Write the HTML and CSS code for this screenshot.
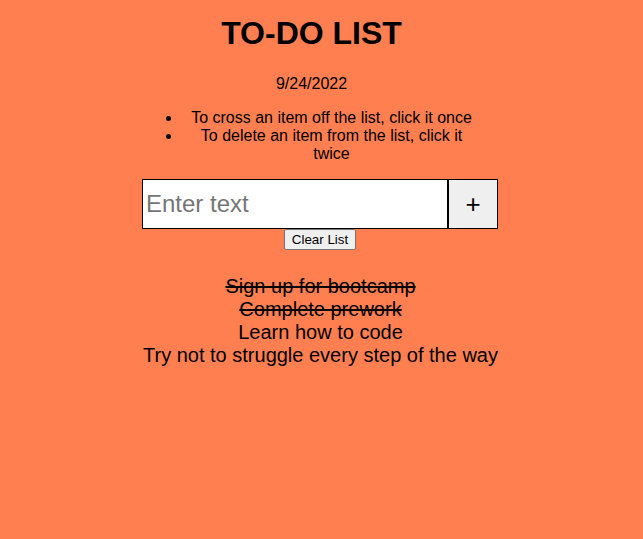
FILE: index.html
```html
<!DOCTYPE html>
<html>
<head>
<meta charset="utf-8">
<link rel="stylesheet" href="styles.css">
</head>
<body>
<header class="header">
  <h1 class="title">TO-DO LIST</h1>
  <p class="date">9/24/2022</p>
</header>
<div class="help-wrap">
  <ul class="help">
    <li>To cross an item off the list, click it once</li>
    <li>To delete an item from the list, click it twice</li>
  </ul>
</div>
<div class="form-wrap">
  <div class="form">
    <input class="entry" type="text" placeholder="Enter text">
    <button class="add">+</button>
  </div>
  <button class="clear">Clear List</button>
</div>
<ul class="items">
  <li class="item done">Sign up for bootcamp</li>
  <li class="item done">Complete prework</li>
  <li class="item">Learn how to code</li>
  <li class="item">Try not to struggle every step of the way</li>
</ul>
</body>
</html>
```
FILE: styles.css
```css
html, body {
  margin: 0;
  padding: 0;
}
body {
  background: #ff7f50;
  font-family: "Liberation Sans", Arial, sans-serif;
  color: #000;
  padding: 0 8px;
  height: 539px;
  box-sizing: border-box;
}
.header {
  text-align: center;
  padding-right: 20px;
  padding-top: 15px;
}
.title {
  font-size: 32px;
  font-weight: bold;
  margin: 0;
}
.date {
  font-size: 16px;
  margin: 23px 0 0;
}
.help-wrap {
  padding-left: 20px;
  margin-top: 16px;
}
.help {
  width: 300px;
  margin: 0 auto;
  padding: 0;
  font-size: 16px;
  text-align: center;
}
.form-wrap {
  margin-top: 16px;
  display: flex;
  flex-direction: column;
  align-items: center;
  padding-right: 3px;
}
.form {
  display: flex;
}
.entry {
  width: 306px;
  height: 50px;
  box-sizing: border-box;
  border: 1px solid #000;
  border-radius: 0;
  padding: 0 3px;
  margin: 0;
  font-family: "Liberation Sans", Arial, sans-serif;
  font-size: 24px;
  background: #fff;
  outline: none;
}
.entry::placeholder {
  color: #757575;
}
.add {
  width: 50px;
  height: 50px;
  box-sizing: border-box;
  border: 1px solid #000;
  border-radius: 0;
  background: #efefef;
  margin: 0;
  padding: 0;
  font-family: "Liberation Sans", Arial, sans-serif;
  font-size: 26px;
  color: #000;
}
.clear {
  margin: 0;
  font-family: "Liberation Sans", Arial, sans-serif;
  font-size: 13.333px;
  padding: 1px 7px;
  height: 21px;
  border: 1px solid #767676;
  border-radius: 2px;
  background: #efefef;
  color: #000;
}
.items {
  list-style: none;
  margin: 25px 0 0;
  padding: 0 2px 0 0;
  text-align: center;
  font-size: 20px;
  line-height: 23px;
}
.done {
  text-decoration: line-through;
}
```
